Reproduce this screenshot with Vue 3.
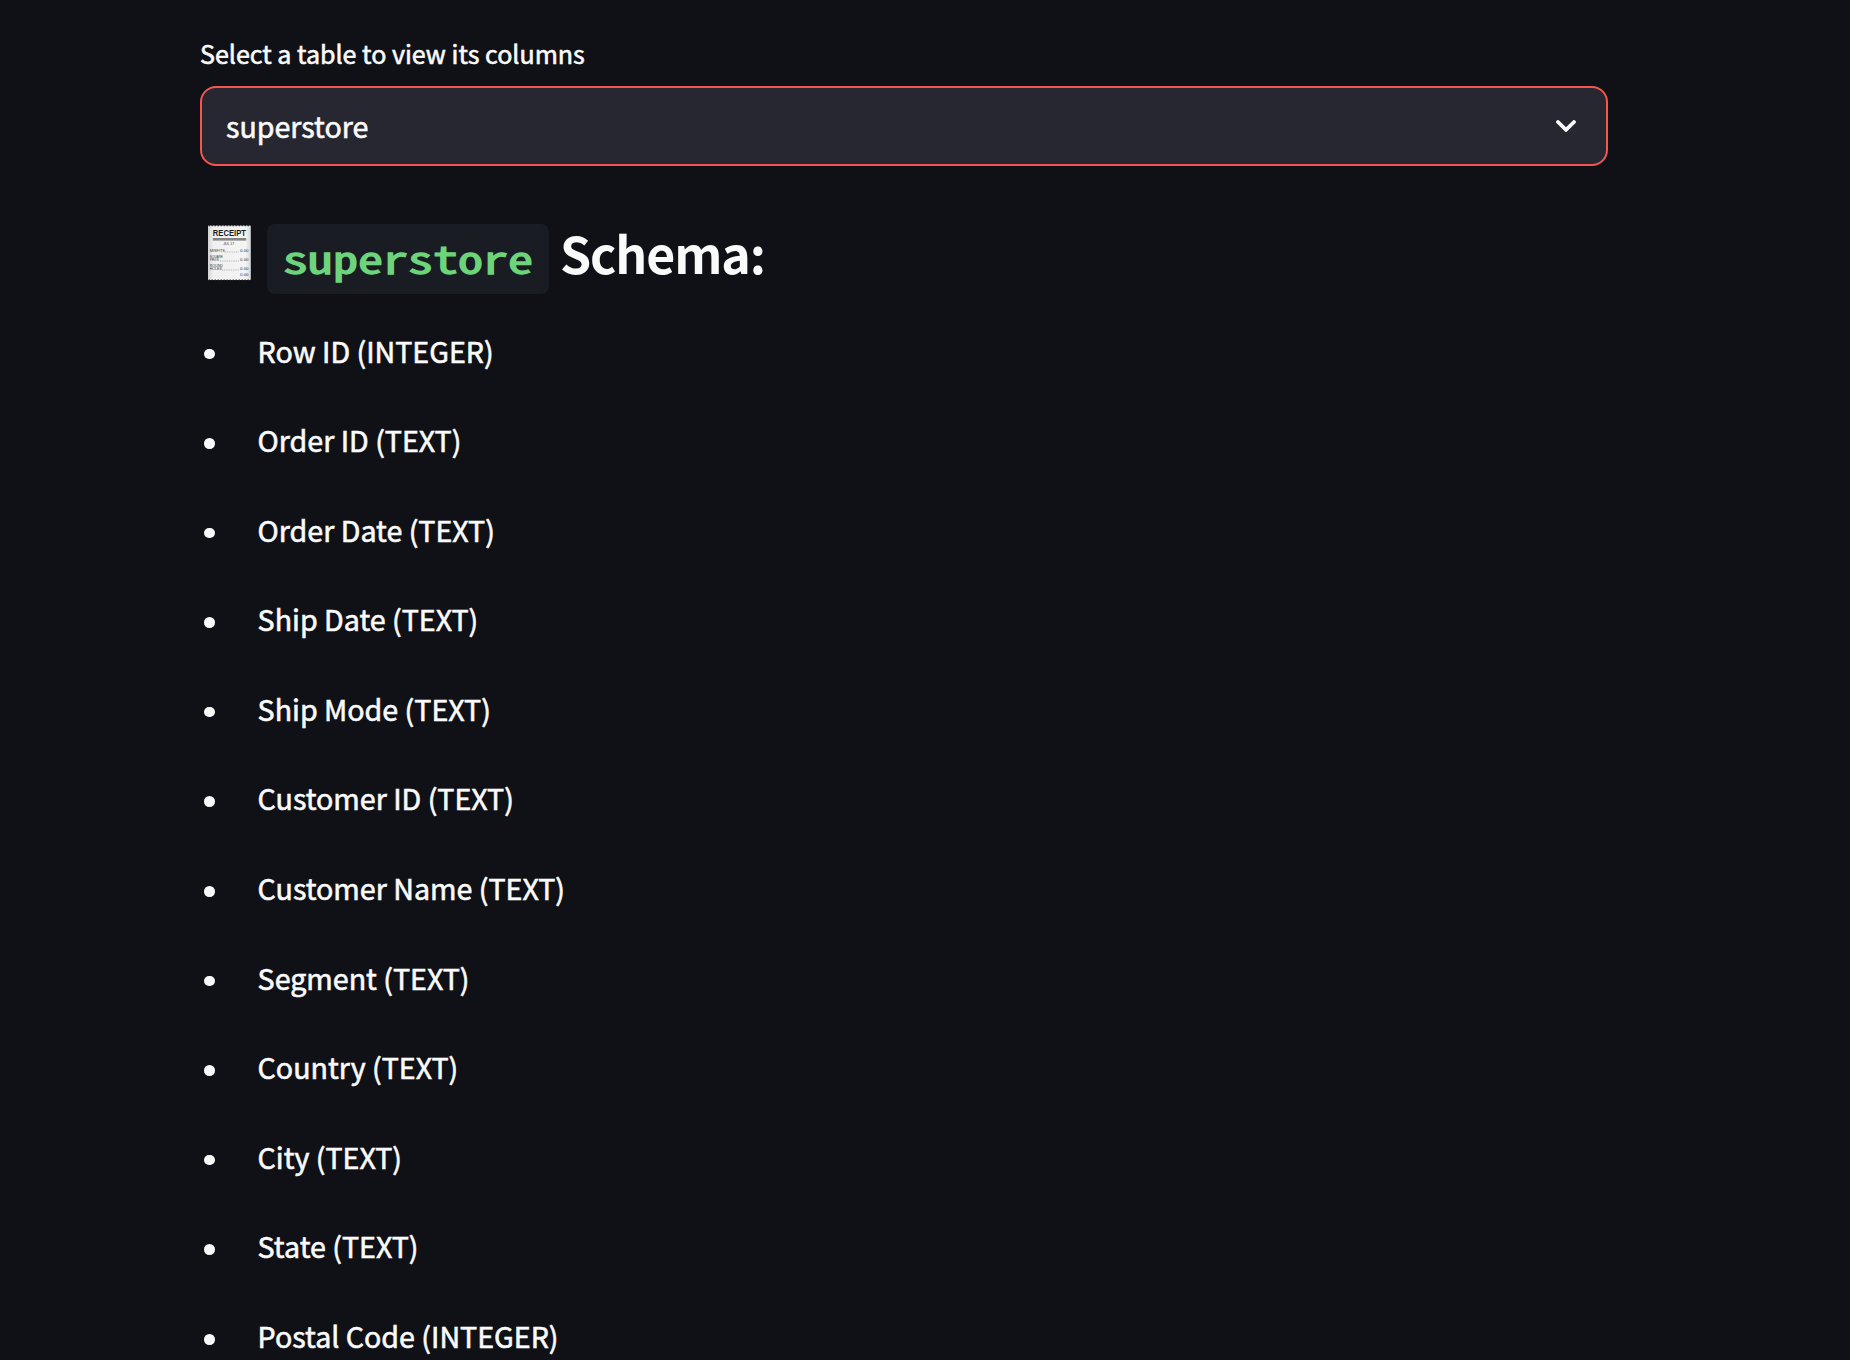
<script setup>
const table = 'superstore'
const columns = [
  ['Row ID', 'INTEGER'],
  ['Order ID', 'TEXT'],
  ['Order Date', 'TEXT'],
  ['Ship Date', 'TEXT'],
  ['Ship Mode', 'TEXT'],
  ['Customer ID', 'TEXT'],
  ['Customer Name', 'TEXT'],
  ['Segment', 'TEXT'],
  ['Country', 'TEXT'],
  ['City', 'TEXT'],
  ['State', 'TEXT'],
  ['Postal Code', 'INTEGER'],
]
</script>

<template>
  <main class="page">
    <label class="label">Select a table to view its columns</label>
    <div class="select">
      <span class="value">{{ table }}</span>
      <svg class="chevron" width="20" height="12" viewBox="0 0 20 12">
        <path d="M2 2 L10 9.8 L18 2" fill="none" stroke="#fafafa" stroke-width="3.8" stroke-linecap="round" />
      </svg>
    </div>

    <h3 class="heading">
      <svg class="receipt" width="44" height="56" viewBox="0 0 44 56">
        <defs>
          <linearGradient id="paper" x1="0" x2="1" y1="0" y2="0">
            <stop offset="0" stop-color="#d2d2d2" />
            <stop offset="0.12" stop-color="#f0f0f0" />
            <stop offset="0.88" stop-color="#f4f4f4" />
            <stop offset="1" stop-color="#d6d6d6" />
          </linearGradient>
        </defs>
        <rect x="0" y="0.5" width="42.8" height="54.5" fill="url(#paper)" />
        <path d="M0.5 0.7H43M0.5 55H43" stroke="#33343a" stroke-width="1.2" stroke-dasharray="1.5 1.5" />
        <text x="4.8" y="11.4" class="title" textLength="33.2" lengthAdjust="spacingAndGlyphs">RECEIPT</text>
        <rect x="4.8" y="13" width="33.4" height="2.6" fill="#858585" />
        <g class="fine">
          <text x="15.2" y="20.2" textLength="11" lengthAdjust="spacingAndGlyphs">JUL 17</text>
          <text x="1.8" y="27.4" textLength="15" lengthAdjust="spacingAndGlyphs">MISFITS</text>
          <text x="1.8" y="33.2" textLength="13" lengthAdjust="spacingAndGlyphs">SQUARE</text>
          <text x="1.8" y="36.2" textLength="9" lengthAdjust="spacingAndGlyphs">PEGS</text>
          <text x="1.8" y="42" textLength="13" lengthAdjust="spacingAndGlyphs">ROUND</text>
          <text x="1.8" y="45.2" textLength="12" lengthAdjust="spacingAndGlyphs">HOLES</text>
          <text x="32" y="27.4" textLength="8.5" lengthAdjust="spacingAndGlyphs">0.00</text>
          <text x="32" y="36.2" textLength="8.5" lengthAdjust="spacingAndGlyphs">0.00</text>
          <text x="32" y="45.2" textLength="8.5" lengthAdjust="spacingAndGlyphs">0.00</text>
          <text x="32" y="51.4" textLength="8.5" lengthAdjust="spacingAndGlyphs">0.00</text>
        </g>
        <path d="M17 27H31M12 36H31M14 45H31" stroke="#999" stroke-width="0.7" stroke-dasharray="1 0.8" />
      </svg>
      <code class="code"><span class="code-text">{{ table }}</span></code>
      <span class="schema">Schema:</span>
    </h3>

    <ul class="columns">
      <li v-for="[name, type] in columns" :key="name" class="column">{{ name }} ({{ type }})</li>
    </ul>
  </main>
</template>

<style>
body {
  background: #0f1116;
}
</style>

<style scoped>
.page {
  box-sizing: border-box;
  height: 1360px;
  overflow: hidden;
  padding: 32px 242px 0 200px;
  background: #0f1116;
  color: #fafafa;
  font-family: "Noto Sans CJK SC", "Noto Sans", sans-serif;
  font-size: 28.62px;
  -webkit-text-stroke: 0.6px currentColor;
}
.label {
  display: block;
  height: 42px;
  margin-bottom: 12px;
  font-size: 25.05px;
  line-height: 42px;
}
.select {
  box-sizing: border-box;
  display: flex;
  align-items: center;
  justify-content: space-between;
  height: 80px;
  padding: 0 30px 0 24px;
  border: 2px solid #f4554f;
  border-radius: 16px;
  background: #262730;
}
.value {
  line-height: 76px;
  height: 76px;
}
.heading {
  display: flex;
  height: 70px;
  margin: 58px 0 11.5px;
  padding-left: 8px;
  font-size: 50px;
  font-weight: 700;
  -webkit-text-stroke: 0;
}
.receipt {
  margin: 1px 15px 0 0;
}
.title {
  font: 700 9px "Liberation Sans", sans-serif;
  fill: #1c1c1c;
}
.fine text {
  font: 400 3.4px "Liberation Sans", sans-serif;
  fill: #333;
}
.code {
  box-sizing: border-box;
  width: 282px;
  height: 70px;
  padding-left: 16px;
  border-radius: 8px;
  background: #1a1c24;
  color: #6ed47c;
  font-family: "Noto Sans Mono CJK SC", "DejaVu Sans Mono", monospace;
  font-size: 50px;
  font-weight: 400;
  line-height: 56px;
  -webkit-text-stroke: 1.7px currentColor;
}
.code-text {
  display: block;
  transform: scaleY(0.765);
  transform-origin: 0 51px;
}
.schema {
  margin-left: 11px;
  letter-spacing: -1.1px;
  line-height: 57px;
}
.columns {
  margin: 0;
  padding: 0;
  list-style: none;
}
.column {
  display: flex;
  align-items: center;
  height: 89.6px;
  line-height: 89.6px;
}
.column::before {
  content: "";
  width: 10.6px;
  height: 10.6px;
  margin: 7px 43px 0 4px;
  border-radius: 50%;
  background: #fafafa;
}
</style>
